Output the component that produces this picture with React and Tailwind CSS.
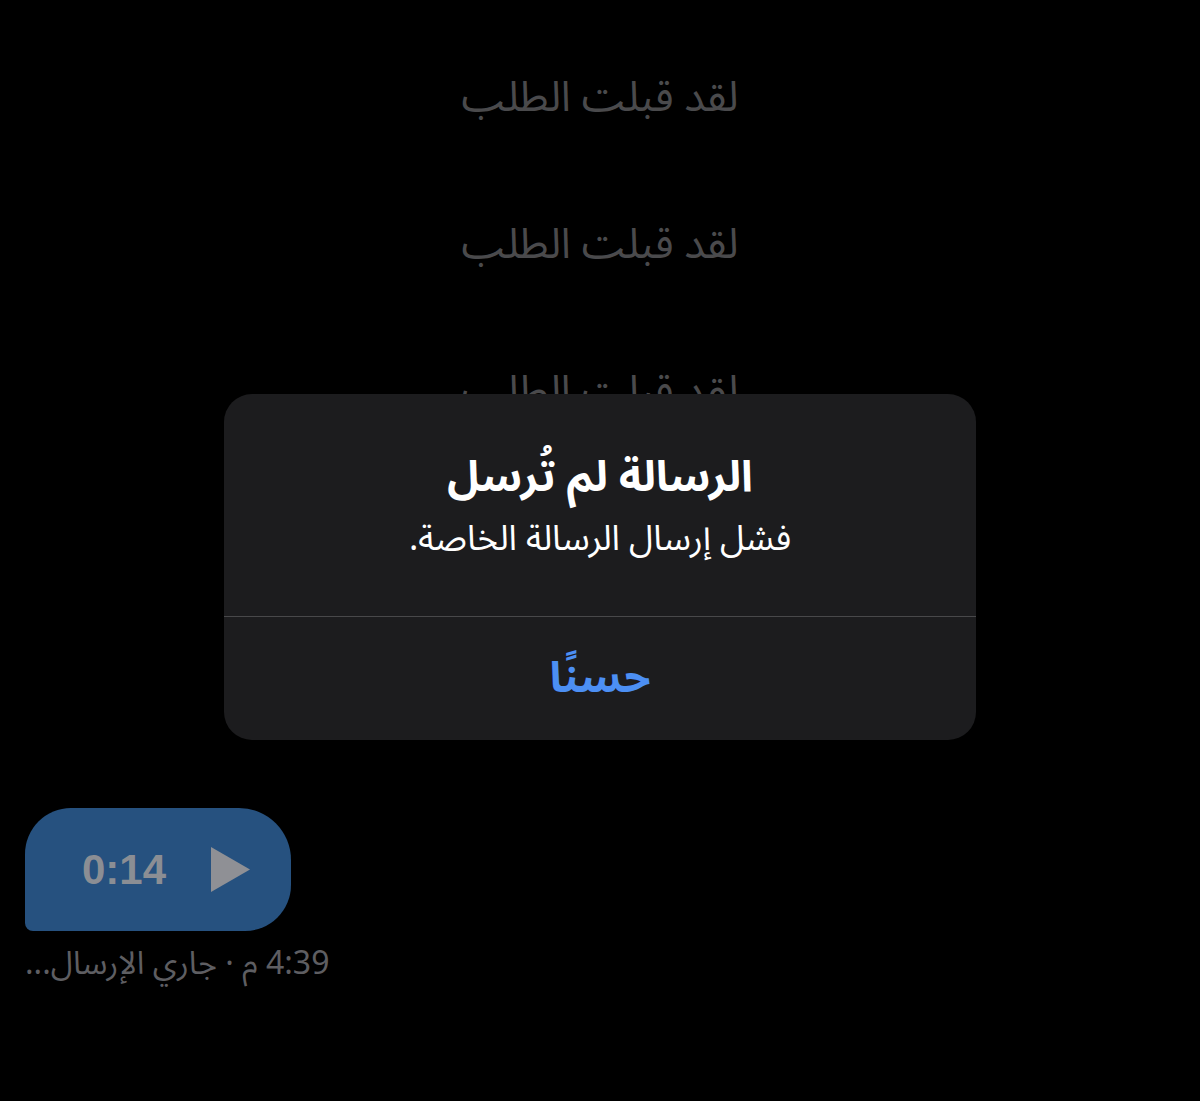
const AR = { fontFamily: '"Noto Sans Arabic", "DejaVu Sans", "Noto Sans", sans-serif' };

const Accepted = () => (
    <div dir="rtl" className="text-center text-[42px] leading-none text-[#4a4a4c]" style={AR}>
        لقد قبلت الطلب
    </div>
);

export default function App() {
    return (
        <div className="relative w-[1200px] h-[1101px] bg-black overflow-hidden">
            {/* chat history */}
            <div className="flex flex-col gap-[105px] pt-[77px]">
                <Accepted />
                <Accepted />
                <Accepted />
            </div>

            {/* voice note */}
            <div className="flex flex-col items-start pl-[25px] mt-[395px]">
                <div className="flex items-center w-[266px] h-[123px] bg-[#26517f] rounded-tl-[46px] rounded-tr-[52px] rounded-br-[46px] rounded-bl-[8px] pl-[57px] gap-[45px]">
                    <span className="text-[42px] font-bold text-[#8b8e94] leading-none" style={{ fontFamily: '"Liberation Sans", Arial, sans-serif' }}>0:14</span>
                    <svg width="39" height="45" viewBox="0 0 39 45">
                        <polygon points="0,0 39,22.5 0,45" fill="#8f9095" />
                    </svg>
                </div>
                <div dir="rtl" className="mt-[17px] text-[32px] leading-none text-[#5e5e62]" style={AR}>
                    4:39 م · جاري الإرسال...
                </div>
            </div>

            {/* alert */}
            <div className="absolute left-[224px] top-[394px] w-[752px] h-[346px] bg-[#1c1c1e] rounded-[28px] flex flex-col" style={AR} dir="rtl">
                <div className="flex flex-col items-center justify-center h-[222px] pt-[2px] gap-[14px]">
                    <div className="text-[43px] font-bold text-white leading-[1.2]">الرسالة لم تُرسل</div>
                    <div className="text-[35px] text-white leading-[1.2]">فشل إرسال الرسالة الخاصة.</div>
                </div>
                <div className="h-px bg-[#48484a]" />
                <div className="flex-1 flex items-center justify-center">
                    <span className="text-[43px] font-bold text-[#4c8ff3] leading-none">حسنًا</span>
                </div>
            </div>
        </div>
    );
}
